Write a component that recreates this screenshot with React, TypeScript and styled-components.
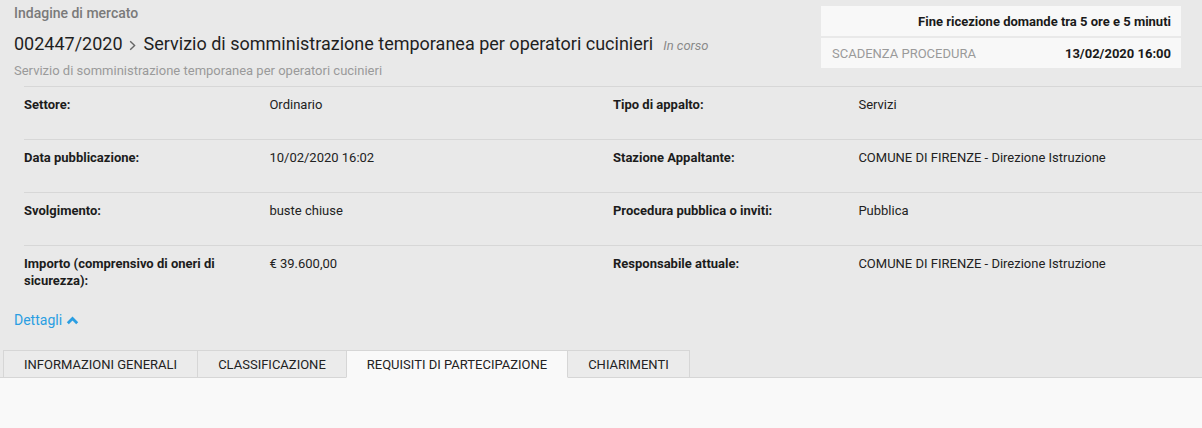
import React from "react";
import styled, { createGlobalStyle } from "styled-components";

const GlobalStyle = createGlobalStyle`
  html, body { margin: 0; padding: 0; }
  body {
    background: #e9e9e9;
    font-family: Roboto, "Noto Sans", "Liberation Sans", sans-serif;
    color: #222;
  }
  * { box-sizing: border-box; }
`;

const Page = styled.div`
  min-height: 100vh;
  display: flex;
  flex-direction: column;
`;

const Header = styled.header`
  display: flex;
  justify-content: space-between;
  align-items: flex-start;
`;

const HeaderLeft = styled.div`
  padding: 5px 0 7px 14px;
  display: flex;
  flex-direction: column;
`;

const Kicker = styled.div`
  font-size: 14px;
  line-height: 16px;
  font-weight: 500;
  color: #7a7a7a;
`;

const TitleRow = styled.h1`
  margin: 11px 0 0;
  display: flex;
  align-items: baseline;
  font-size: 18px;
  line-height: 24px;
  font-weight: 400;
  color: #1f1f1f;
`;

const Crumb = styled.span`
  display: inline-flex;
  align-items: center;
  margin: 0 8px 0 6px;
  align-self: center;
`;

const Status = styled.span`
  margin-left: 10px;
  font-size: 13px;
  font-style: italic;
  color: #8a8a8a;
`;

const Subtitle = styled.div`
  margin-top: 5px;
  font-size: 13px;
  line-height: 16px;
  color: #9a9a9a;
`;

const DeadlineBox = styled.div`
  width: 360px;
  margin: 6px 21px 0 0;
  display: flex;
  flex-direction: column;
  gap: 2px;
`;

const DeadlineRow = styled.div<{ $split?: boolean }>`
  height: 30px;
  background: #f8f8f8;
  display: flex;
  align-items: center;
  justify-content: ${(p) => (p.$split ? "space-between" : "flex-end")};
  padding: 0 10px 0 11px;
  font-size: 13px;
`;

const DeadlineLabel = styled.span`
  color: #9a9a9a;
  text-transform: uppercase;
`;

const Strong = styled.span`
  font-weight: 700;
  color: #1a1a1a;
`;

const Details = styled.section`
  margin-left: 24px;
`;

const DetailRow = styled.div`
  display: grid;
  grid-template-columns: 5fr 7fr 5fr 7fr;
  min-height: 53px;
  padding-top: 9px;
  border-top: 1px solid #d7d7d7;
  font-size: 13px;
  line-height: 17px;
`;

const Label = styled.div`
  font-weight: 700;
  color: #1c1c1c;
  padding-right: 20px;
`;

const Value = styled.div`
  color: #222;
  padding-right: 16px;
`;

const Toggle = styled.button`
  align-self: flex-start;
  margin: 12px 0 0 14px;
  padding: 0;
  border: 0;
  background: none;
  display: inline-flex;
  align-items: center;
  gap: 4px;
  font-family: inherit;
  font-size: 14px;
  line-height: 20px;
  color: #2a9ee2;
  cursor: pointer;
`;

const TabBar = styled.nav`
  margin-top: 20px;
  display: flex;
  padding-left: 3px;
  border-bottom: 1px solid #d6d6d6;
`;

const Tab = styled.div<{ $active?: boolean }>`
  height: 28px;
  margin-bottom: -1px;
  margin-left: -1px;
  &:first-child { margin-left: 0; }
  padding: 0 20px;
  display: flex;
  align-items: center;
  border: 1px solid #d6d6d6;
  border-bottom-color: ${(p) => (p.$active ? "#f9f9f9" : "#d6d6d6")};
  background: ${(p) => (p.$active ? "#f9f9f9" : "#ebebeb")};
  font-size: 13px;
  text-transform: uppercase;
  color: #222;
  position: relative;
  z-index: ${(p) => (p.$active ? 1 : 0)};
`;

const Content = styled.div`
  flex: 1;
  background: #f9f9f9;
`;

const rows: [string, string, string, string][] = [
  ["Settore:", "Ordinario", "Tipo di appalto:", "Servizi"],
  [
    "Data pubblicazione:",
    "10/02/2020 16:02",
    "Stazione Appaltante:",
    "COMUNE DI FIRENZE - Direzione Istruzione",
  ],
  ["Svolgimento:", "buste chiuse", "Procedura pubblica o inviti:", "Pubblica"],
  [
    "Importo (comprensivo di oneri di sicurezza):",
    "€ 39.600,00",
    "Responsabile attuale:",
    "COMUNE DI FIRENZE - Direzione Istruzione",
  ],
];

const tabs = [
  "Informazioni generali",
  "Classificazione",
  "Requisiti di partecipazione",
  "Chiarimenti",
];

export default function App() {
  return (
    <Page>
      <GlobalStyle />
      <Header>
        <HeaderLeft>
          <Kicker>Indagine di mercato</Kicker>
          <TitleRow>
            002447/2020
            <Crumb>
              <svg width="7" height="11" viewBox="0 0 7 11">
                <polyline
                  points="1.2,1.2 5.6,5.5 1.2,9.8"
                  fill="none"
                  stroke="#666"
                  strokeWidth="1.4"
                />
              </svg>
            </Crumb>
            Servizio di somministrazione temporanea per operatori cucinieri
            <Status>In corso</Status>
          </TitleRow>
          <Subtitle>
            Servizio di somministrazione temporanea per operatori cucinieri
          </Subtitle>
        </HeaderLeft>
        <DeadlineBox>
          <DeadlineRow>
            <Strong>Fine ricezione domande tra 5 ore e 5 minuti</Strong>
          </DeadlineRow>
          <DeadlineRow $split>
            <DeadlineLabel>Scadenza procedura</DeadlineLabel>
            <Strong>13/02/2020 16:00</Strong>
          </DeadlineRow>
        </DeadlineBox>
      </Header>
      <Details>
        {rows.map((r) => (
          <DetailRow key={r[0]}>
            <Label>{r[0]}</Label>
            <Value>{r[1]}</Value>
            <Label>{r[2]}</Label>
            <Value>{r[3]}</Value>
          </DetailRow>
        ))}
      </Details>
      <Toggle>
        Dettagli
        <svg width="13" height="9" viewBox="0 0 13 9">
          <polyline
            points="1.8,7.3 6.5,2.6 11.2,7.3"
            fill="none"
            stroke="#2a9ee2"
            strokeWidth="2.8"
          />
        </svg>
      </Toggle>
      <TabBar>
        {tabs.map((t, i) => (
          <Tab key={t} $active={i === 2}>
            {t}
          </Tab>
        ))}
      </TabBar>
      <Content />
    </Page>
  );
}
